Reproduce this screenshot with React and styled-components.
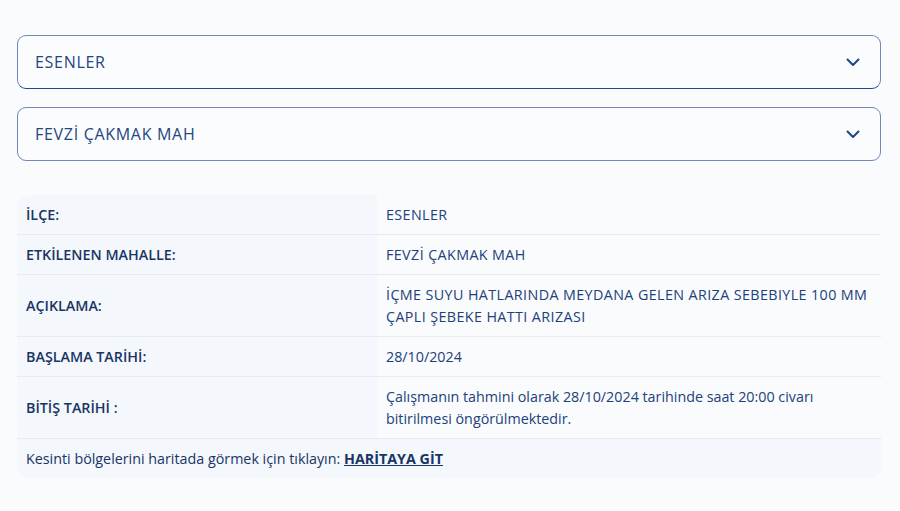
import React from "react";
import styled, { createGlobalStyle } from "styled-components";

const GlobalStyle = createGlobalStyle`
  html, body {
    margin: 0;
    padding: 0;
    background: #f9fbfd;
  }
  body {
    font-family: "Open Sans", "Noto Sans", sans-serif;
    color: #1d3b6e;
  }
`;

const rows = [
  { label: "İLÇE:", value: "ESENLER", caps: true },
  { label: "ETKİLENEN MAHALLE:", value: "FEVZİ ÇAKMAK MAH", caps: true },
  {
    label: "AÇIKLAMA:",
    value: "İÇME SUYU HATLARINDA MEYDANA GELEN ARIZA SEBEBIYLE 100 MM ÇAPLI ŞEBEKE HATTI ARIZASI",
    caps: true,
  },
  { label: "BAŞLAMA TARİHİ:", value: "28/10/2024" },
  {
    label: "BİTİŞ TARİHİ :",
    value: "Çalışmanın tahmini olarak 28/10/2024 tarihinde saat 20:00 civarı bitirilmesi öngörülmektedir.",
  },
];

const Chevron = () => (
  <svg width="16" height="16" viewBox="0 0 16 16" fill="none">
    <path d="M2.5 5.5L8 11L13.5 5.5" stroke="#1d4585" strokeWidth="2" strokeLinecap="round" strokeLinejoin="round" />
  </svg>
);

const App = () => {
  return (
    <Page>
      <GlobalStyle />
      <Select active>
        <span>ESENLER</span>
        <Chevron />
      </Select>
      <Select>
        <span>FEVZİ ÇAKMAK MAH</span>
        <Chevron />
      </Select>

      <Card>
        {rows.map((r) => (
          <Row key={r.label}>
            <Label>{r.label}</Label>
            <Value $caps={r.caps}>{r.value}</Value>
          </Row>
        ))}
        <Footer>
          Kesinti bölgelerini haritada görmek için tıklayın: <MapLink href="#">HARİTAYA GİT</MapLink>
        </Footer>
      </Card>
    </Page>
  );
};

export default App;

const Page = styled.div`
  padding: 35px 19px 30px 17px;
  display: flex;
  flex-direction: column;
`;

const Select = styled.div`
  height: 54px;
  box-sizing: border-box;
  border: 1px solid #7088b8;
  border-bottom-color: ${(p) => (p.active ? "#1f4a8e" : "#7088b8")};
  border-radius: 9px;
  background: #fbfcfe;
  display: flex;
  align-items: center;
  justify-content: space-between;
  padding: 0 19px 0 17px;
  margin-bottom: 18px;
  font-size: 16px;
  font-weight: 500;
  letter-spacing: 0.7px;
  color: #23467f;
`;

const Card = styled.div`
  margin-top: 16px;
  border-radius: 12px;
  overflow: hidden;
  background: #f4f7fb;
  font-size: 14.3px;
  line-height: 22px;
`;

const Row = styled.div`
  display: grid;
  grid-template-columns: 360px 1fr;
  border-bottom: 1px solid #e7eaef;
`;

const Label = styled.div`
  display: flex;
  align-items: center;
  padding: 9px 9px 8px;
  font-weight: 600;
  color: #183565;
`;

const Value = styled.div`
  background: #f9fbfd;
  padding: 9px 4px 8px 9px;
  color: #22417a;
  letter-spacing: ${(p) => (p.$caps ? "0.4px" : "0")};
`;

const Footer = styled.div`
  padding: 9px 9px 8px;
  font-weight: 500;
  color: #183565;
`;

const MapLink = styled.a`
  color: #183565;
  font-weight: 700;
  text-decoration: underline;
`;
